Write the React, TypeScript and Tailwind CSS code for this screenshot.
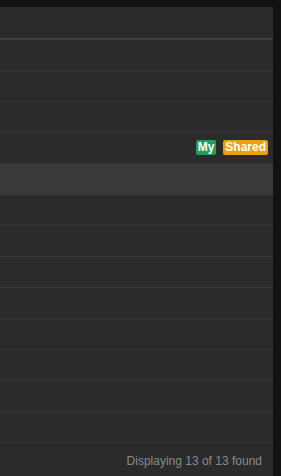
import React from 'react';

type Row = { id: number; badges?: boolean; hover?: boolean };

const ROWS: Row[] = Array.from({ length: 13 }, (_, i) => ({
  id: i + 1,
  badges: i === 3,
  hover: i === 4,
}));

function Badges() {
  return (
    <div className="flex items-center gap-[7px] mb-[2px]">
      <span className="h-[15px] px-[2px] rounded-[2px] bg-[#2a9a5c] text-white text-[12px] font-bold leading-[15px]">
        My
      </span>
      <span className="h-[15px] px-[2px] rounded-[2px] bg-[#e9a20f] text-white text-[12px] font-bold leading-[15px]">
        Shared
      </span>
    </div>
  );
}

export default function App() {
  return (
    <div
      className="h-screen w-full bg-[#111214] pt-[7px] pr-[8px] overflow-hidden"
      style={{ fontFamily: '"Liberation Sans", Arial, sans-serif' }}
    >
      <div className="h-full bg-[#2b2b2b] flex flex-col">
        {/* Header */}
        <div className="h-[33px] shrink-0 border-b-2 border-[#3f3f3f]" />

        {/* Rows */}
        {ROWS.map(row => (
          <div
            key={row.id}
            className={`h-[31px] shrink-0 border-b border-[#363636] flex items-center justify-end pr-[5px] ${
              row.hover ? 'bg-[#393939]' : ''
            }`}
          >
            {row.badges && <Badges />}
          </div>
        ))}

        {/* Footer */}
        <div className="flex justify-end pt-[9px] pr-[11px]">
          <span className="text-[12px] text-[#8a8a8a]">Displaying 13 of 13 found</span>
        </div>
      </div>
    </div>
  );
}
